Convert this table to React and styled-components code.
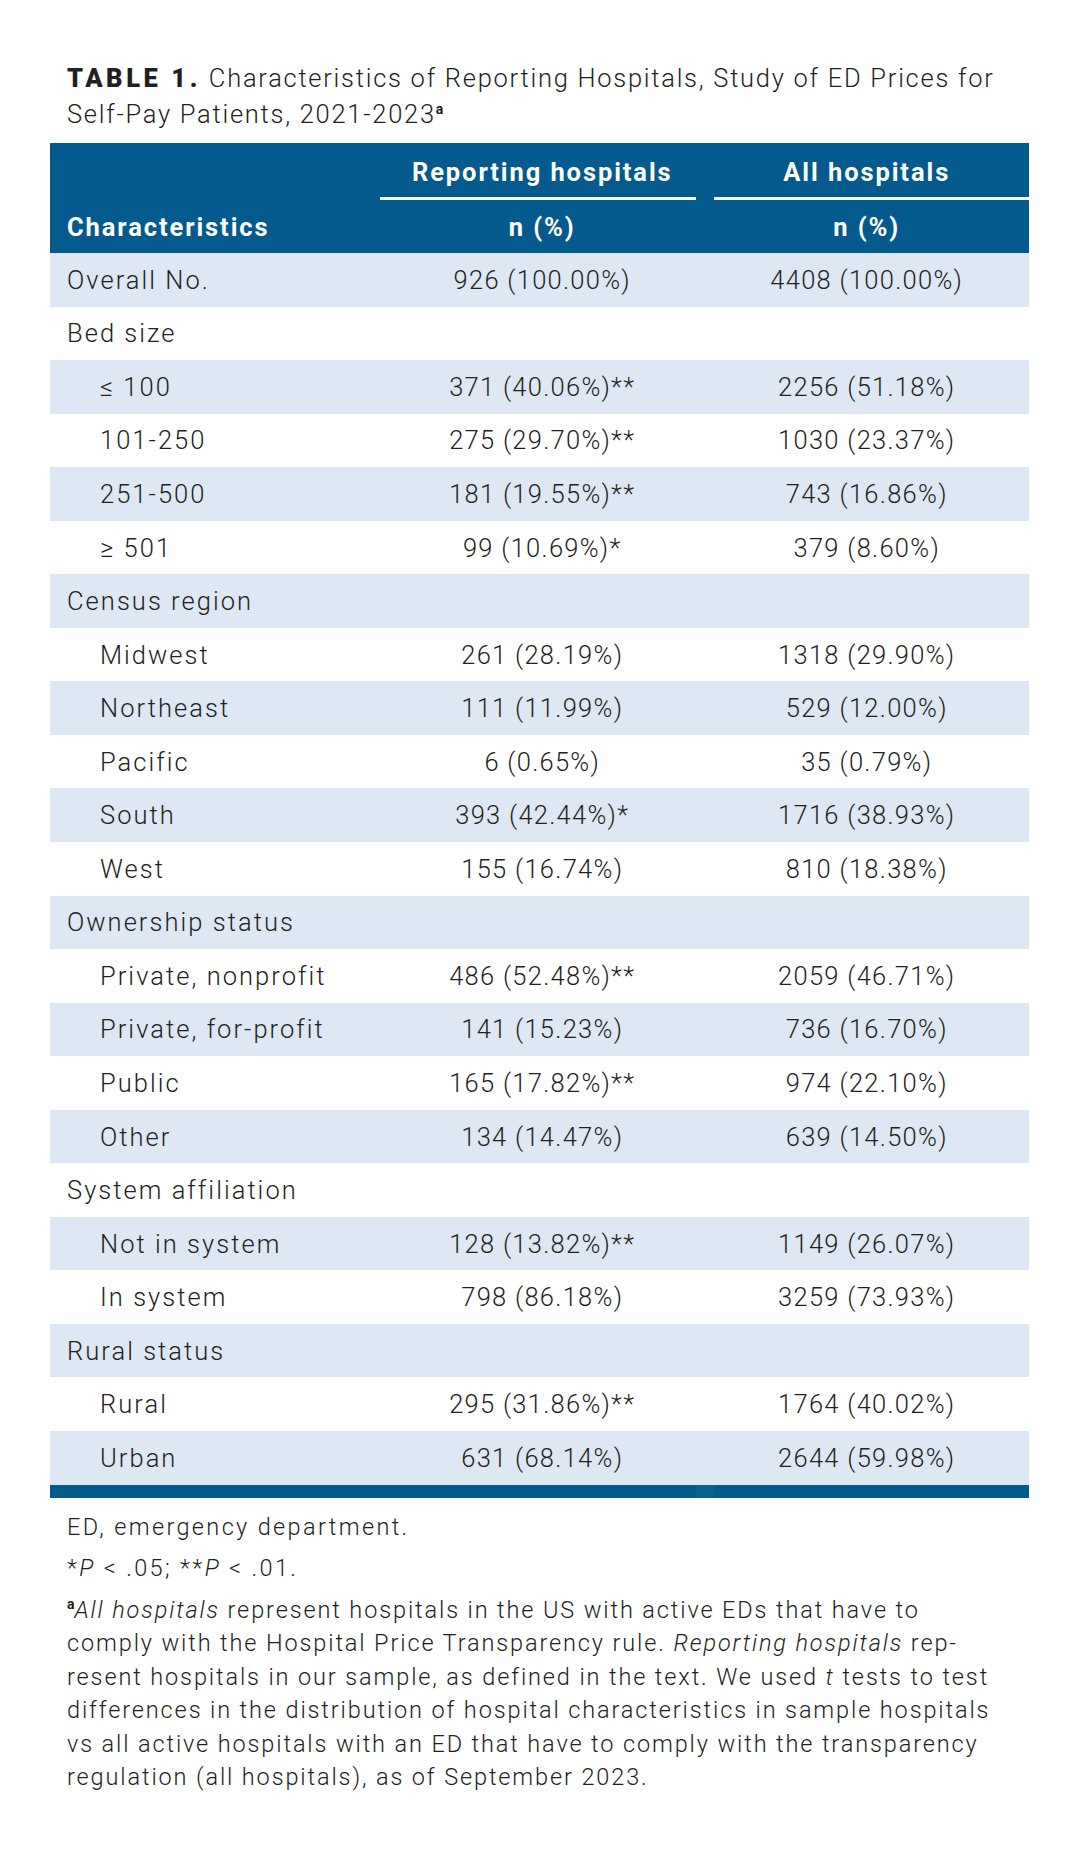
import React from "react";
import styled, { createGlobalStyle } from "styled-components";

const GlobalStyle = createGlobalStyle`
    body {
        margin: 0;
        background: #ffffff;
        font-family: Roboto, "Open Sans", "Liberation Sans", sans-serif;
        color: #231f20;
    }
`;

const BLUE = "#045a8d";
const LIGHT = "#dde8f4";

const Page = styled.div`
    width: 979px;
    padding: 60px 0 40px 50px;
`;

const Title = styled.div`
    padding-left: 17px;
    font-size: 25.5px;
    line-height: 36px;
    font-weight: 300;
    letter-spacing: 0.068em;
    margin-bottom: 11px;

    b {
        font-weight: 900;
        letter-spacing: 0.14em;
    }

    sup {
        font-size: 14px;
        font-weight: 700;
        vertical-align: 9px;
        line-height: 0;
        letter-spacing: 0;
    }
`;

const Line = styled.span`
    display: block;
    white-space: nowrap;
`;

const Head = styled.div`
    display: grid;
    grid-template-columns: 330px 1fr 1fr;
    grid-template-rows: 54px 3px 53px;
    background: ${BLUE};
    color: #ffffff;
    font-size: 25.5px;
    font-weight: 700;
    letter-spacing: 0.075em;
`;

const HeadCell = styled.div`
    display: flex;
    align-items: center;
    justify-content: ${(p) => (p.$left ? "flex-start" : "center")};
    padding-left: ${(p) => (p.$left ? "17px" : "0")};
    padding-top: ${(p) => (p.$row === 1 ? "4px" : "0")};
    grid-column: ${(p) => p.$col};
    grid-row: ${(p) => p.$row};
`;

const Rule = styled.div`
    grid-row: 2;
    grid-column: ${(p) => p.$col};
    background: #ffffff;
    margin: ${(p) => (p.$col === 2 ? "0 9px 0 0" : "0 0 0 9px")};
`;

const Row = styled.div`
    display: grid;
    grid-template-columns: 330px 1fr 1fr;
    height: 53.56px;
    align-items: center;
    background: ${(p) => (p.$shade ? LIGHT : "#ffffff")};
    font-size: 25.5px;
    font-weight: 300;
    letter-spacing: 0.08em;
`;

const Label = styled.div`
    padding-left: ${(p) => (p.$indent ? "50px" : "17px")};
    white-space: nowrap;
`;

const Value = styled.div`
    text-align: center;
    white-space: nowrap;
    letter-spacing: 0.05em;
`;

const BottomBar = styled.div`
    display: grid;
    grid-template-columns: 646px 18px 1fr;
    height: 13px;
    background: ${BLUE};
`;

const BarGap = styled.div`
    grid-column: 2;
    background: #0b6093;
`;

const Notes = styled.div`
    padding-left: 17px;
    margin-top: 13px;
    font-size: 23.5px;
    font-weight: 300;
    line-height: 33.5px;
    letter-spacing: 0.08em;

    i {
        font-style: italic;
    }

    sup {
        font-size: 14px;
        font-weight: 700;
        vertical-align: 9px;
        line-height: 0;
        letter-spacing: 0;
    }
`;

const Note = styled.div`
    margin-bottom: ${(p) => (p.$gap ? "8px" : "0")};
    letter-spacing: ${(p) => (p.$wide ? "0.1em" : "inherit")};
`;

const rows = [
    { label: "Overall No.", a: "926 (100.00%)", b: "4408 (100.00%)" },
    { label: "Bed size" },
    { label: "\u2264 100", a: "371 (40.06%)**", b: "2256 (51.18%)", indent: true },
    { label: "101-250", a: "275 (29.70%)**", b: "1030 (23.37%)", indent: true },
    { label: "251-500", a: "181 (19.55%)**", b: "743 (16.86%)", indent: true },
    { label: "\u2265 501", a: "99 (10.69%)*", b: "379 (8.60%)", indent: true },
    { label: "Census region" },
    { label: "Midwest", a: "261 (28.19%)", b: "1318 (29.90%)", indent: true },
    { label: "Northeast", a: "111 (11.99%)", b: "529 (12.00%)", indent: true },
    { label: "Pacific", a: "6 (0.65%)", b: "35 (0.79%)", indent: true },
    { label: "South", a: "393 (42.44%)*", b: "1716 (38.93%)", indent: true },
    { label: "West", a: "155 (16.74%)", b: "810 (18.38%)", indent: true },
    { label: "Ownership status" },
    { label: "Private, nonprofit", a: "486 (52.48%)**", b: "2059 (46.71%)", indent: true },
    { label: "Private, for-profit", a: "141 (15.23%)", b: "736 (16.70%)", indent: true },
    { label: "Public", a: "165 (17.82%)**", b: "974 (22.10%)", indent: true },
    { label: "Other", a: "134 (14.47%)", b: "639 (14.50%)", indent: true },
    { label: "System affiliation" },
    { label: "Not in system", a: "128 (13.82%)**", b: "1149 (26.07%)", indent: true },
    { label: "In system", a: "798 (86.18%)", b: "3259 (73.93%)", indent: true },
    { label: "Rural status" },
    { label: "Rural", a: "295 (31.86%)**", b: "1764 (40.02%)", indent: true },
    { label: "Urban", a: "631 (68.14%)", b: "2644 (59.98%)", indent: true }
];

export default function App () {
    return (
        <Page>
            <GlobalStyle />
            <Title>
                <Line>
                    <b>TABLE 1.</b> Characteristics of Reporting Hospitals, Study of ED Prices for
                </Line>
                <Line>
                    Self-Pay Patients, 2021-2023<sup>a</sup>
                </Line>
            </Title>

            <Head>
                <HeadCell $col={2} $row={1}>Reporting hospitals</HeadCell>
                <HeadCell $col={3} $row={1}>All hospitals</HeadCell>
                <Rule $col={2} />
                <Rule $col={3} />
                <HeadCell $col={1} $row={3} $left>Characteristics</HeadCell>
                <HeadCell $col={2} $row={3}>n (%)</HeadCell>
                <HeadCell $col={3} $row={3}>n (%)</HeadCell>
            </Head>

            {rows.map((r, i) => (
                <Row key={r.label} $shade={i % 2 === 0}>
                    <Label $indent={r.indent}>{r.label}</Label>
                    <Value>{r.a}</Value>
                    <Value>{r.b}</Value>
                </Row>
            ))}

            <BottomBar>
                <BarGap />
            </BottomBar>

            <Notes>
                <Note $gap $wide>ED, emergency department.</Note>
                <Note $gap $wide>
                    *<i>P</i> &lt; .05; **<i>P</i> &lt; .01.
                </Note>
                <Note>
                    <Line>
                        <sup>a</sup><i>All hospitals</i> represent hospitals in the US with active EDs that have to
                    </Line>
                    <Line>
                        comply with the Hospital Price Transparency rule. <i>Reporting hospitals</i> rep-
                    </Line>
                    <Line>
                        resent hospitals in our sample, as defined in the text. We used <i>t</i> tests to test
                    </Line>
                    <Line>differences in the distribution of hospital characteristics in sample hospitals</Line>
                    <Line>vs all active hospitals with an ED that have to comply with the transparency</Line>
                    <Line>regulation (all hospitals), as of September 2023.</Line>
                </Note>
            </Notes>
        </Page>
    );
}
